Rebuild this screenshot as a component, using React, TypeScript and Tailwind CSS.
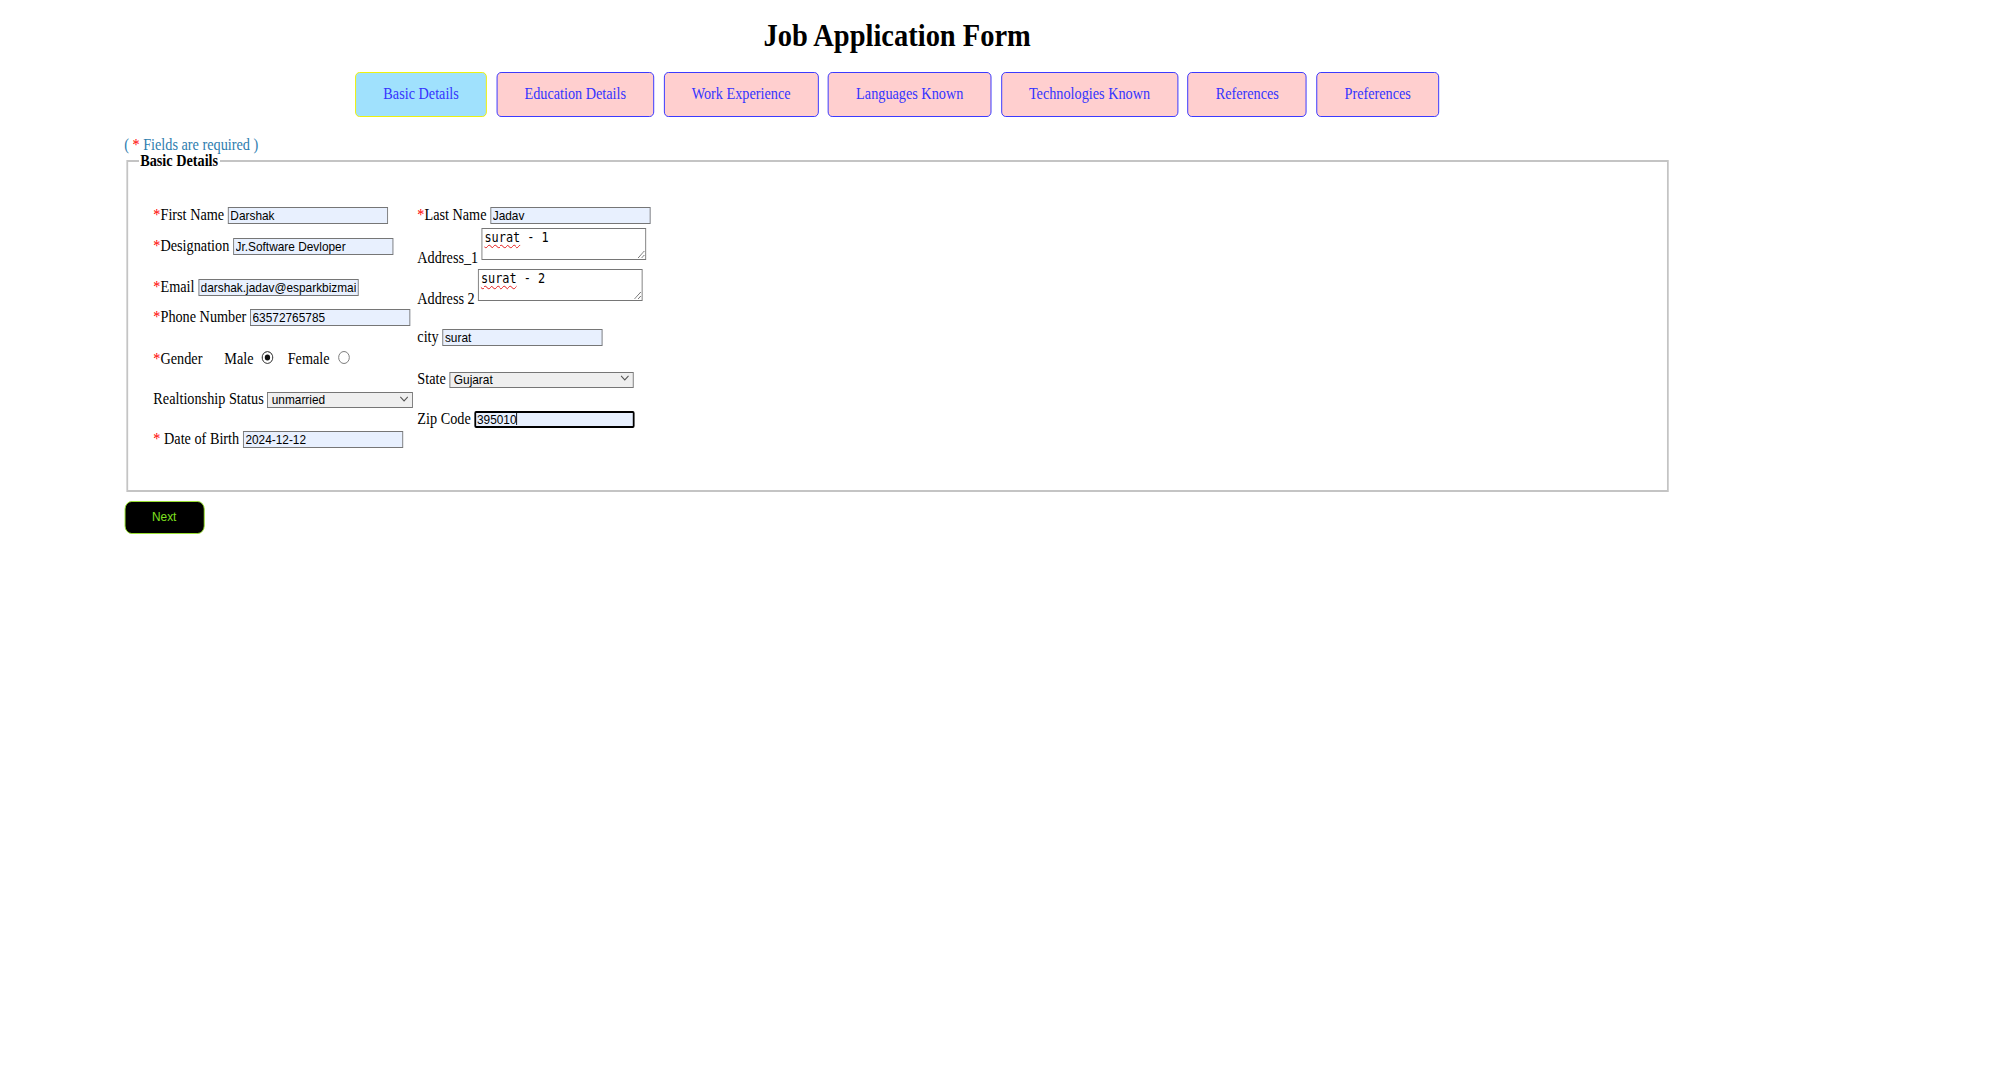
const tabs = [
  "Basic Details",
  "Education Details",
  "Work Experience",
  "Languages Known",
  "Technologies Known",
  "References",
  "Preferences",
];

const inputCls =
  "w-[180px] h-[17px] px-[2px] border border-[#767676] bg-[#e8f0fe] text-black text-[13.33px] leading-[15px] font-['Liberation_Sans',Arial,sans-serif] align-baseline";

const selectCls =
  "h-[16px] pl-[4px] pr-[18px] appearance-none border border-[#767676] bg-[#efefef] text-black text-[13.33px] leading-[14px] font-['Liberation_Sans',Arial,sans-serif] align-baseline";

const areaCls =
  "w-[185px] h-[32.5px] px-[2px] py-[1px] border border-[#767676] bg-white text-black text-[13.33px] leading-[15.5px] font-['DejaVu_Sans_Mono',monospace] align-baseline";

const radioCls =
  "w-[13px] h-[13px] appearance-none rounded-full border border-[#767676] bg-white align-baseline checked:border-[#555] checked:bg-[#111] checked:shadow-[inset_0_0_0_2.5px_white]";

function Req() {
  return <span className="text-[red]">*</span>;
}

function Tab({ label, active }: { label: string; active?: boolean }) {
  return (
    <button
      type="button"
      className={
        active
          ? "h-[45px] px-[30.5px] pb-[2px] flex items-center rounded-[5px] border-[1.5px] border-[#f0f000] bg-[#a0e1fd] text-[#3434ff] text-[16px] leading-[18px]"
          : "h-[45px] px-[30.5px] pb-[2px] flex items-center rounded-[5px] border-[1.5px] border-[#3030ff] bg-[#ffcfcf] text-[#3434ff] text-[16px] leading-[18px]"
      }
    >
      {label}
    </button>
  );
}

function Chevron() {
  return (
    <svg
      className="pointer-events-none absolute right-[5px] top-[5.5px] w-[10px] h-[6px] text-[#555]"
      viewBox="0 0 10 6"
      fill="none"
      stroke="currentColor"
      strokeWidth={1.2}
    >
      <path d="M0.8 0.8 5 5 9.2 0.8" />
    </svg>
  );
}

function Area({ value }: { value: string }) {
  const word = value.split(" ")[0];
  return (
    <span className="relative inline-block align-[2.5px]">
      <textarea defaultValue={value} spellCheck={false} className={areaCls} />
      <span className="pointer-events-none absolute left-[3px] top-[2px] text-transparent text-[13.33px] leading-[15.5px] font-['DejaVu_Sans_Mono',monospace] underline decoration-wavy decoration-[#e31b1b] decoration-1 underline-offset-[2px]">
        {word}
      </span>
    </span>
  );
}

export default function App() {
  return (
    <div className="min-h-screen overflow-hidden bg-white">
      <div className="w-[2239px] origin-top-left scale-x-[0.89] font-['Liberation_Serif','Times_New_Roman',serif] text-black">
        <div className="ml-[139.5px] w-[1737px] pt-[17px]">
          <h1 className="text-center text-[32px] leading-[37px] font-bold">
            Job Application Form
          </h1>

          <div className="mt-[18px] flex justify-center gap-[10.7px]">
            {tabs.map((t, i) => (
              <Tab key={t} label={t} active={i === 0} />
            ))}
          </div>

          <div className="mt-[19px] text-[16px] leading-[18px] text-[#2d7cae]">
            ( <span className="text-[red]">*</span> Fields are required )
          </div>

          <fieldset className="mx-[2px] -mt-[2.5px] border-2 border-[#c4c4c4] px-3 pt-[6px] pb-0">
            <legend className="px-[2px] font-bold text-[16px] leading-[18px]">
              Basic Details
            </legend>

            <div className="flex h-[314px] pt-[30.6px] pl-[16.8px] text-[16px] leading-[18px] whitespace-nowrap">
              <div className="w-[296.6px]">
                <div className="h-[31.2px]">
                  <label>
                    <Req />First Name
                  </label>{" "}
                  <input type="text" defaultValue="Darshak" className={inputCls} />
                </div>
                <div className="h-[40.3px]">
                  <label>
                    <Req />Designation
                  </label>{" "}
                  <input type="text" defaultValue="Jr.Software Devloper" className={inputCls} />
                </div>
                <div className="h-[30px]">
                  <label>
                    <Req />Email
                  </label>{" "}
                  <input
                    type="text"
                    defaultValue="darshak.jadav@esparkbizmail.com"
                    className={inputCls}
                  />
                </div>
                <div className="h-[42.3px]">
                  <label>
                    <Req />Phone Number
                  </label>{" "}
                  <input type="text" defaultValue="63572765785" className={inputCls} />
                </div>
                <div className="h-[40.6px]">
                  <span>
                    <Req />Gender
                  </span>
                  <span className="ml-[24.6px]">Male</span>
                  <input type="radio" name="gender" defaultChecked className={`${radioCls} ml-[9.5px]`} />
                  <span className="ml-[15.9px]">Female</span>
                  <input type="radio" name="gender" className={`${radioCls} ml-[9.7px]`} />
                </div>
                <div className="h-[39.5px]">
                  <label>Realtionship Status</label>{" "}
                  <span className="relative inline-block">
                    <select defaultValue="unmarried" className={`${selectCls} w-[163.4px]`}>
                      <option value="unmarried">unmarried</option>
                      <option value="married">married</option>
                    </select>
                    <Chevron />
                  </span>
                </div>
                <div>
                  <label>
                    <Req /> Date of Birth
                  </label>{" "}
                  <input type="text" defaultValue="2024-12-12" className={inputCls} />
                </div>
              </div>

              <div>
                <div className="h-[21.5px]">
                  <label>
                    <Req />Last Name
                  </label>{" "}
                  <input type="text" defaultValue="Jadav" className={inputCls} />
                </div>
                <div className="h-[41.3px]">
                  <label>Address_1</label> <Area value="surat - 1" />
                </div>
                <div className="h-[58.9px]">
                  <label>Address 2</label> <Area value="surat - 2" />
                </div>
                <div className="h-[42px]">
                  <label>city</label>{" "}
                  <input type="text" defaultValue="surat" className={inputCls} />
                </div>
                <div className="h-[40px]">
                  <label>State</label>{" "}
                  <span className="relative inline-block">
                    <select defaultValue="Gujarat" className={`${selectCls} w-[206.8px]`}>
                      <option value="Gujarat">Gujarat</option>
                      <option value="Maharashtra">Maharashtra</option>
                      <option value="Rajasthan">Rajasthan</option>
                    </select>
                    <Chevron />
                  </span>
                </div>
                <div>
                  <label>Zip Code</label>{" "}
                  <span className="relative inline-block">
                    <input
                      type="text"
                      defaultValue="395010"
                      className="w-[180px] h-[17px] px-[1px] border-2 border-black rounded-[2px] bg-[#e8f0fe] text-black text-[13.33px] leading-[13px] font-['Liberation_Sans',Arial,sans-serif] align-baseline"
                    />
                    <span className="pointer-events-none absolute left-[47px] top-[2px] h-[13px] w-px bg-black" />
                  </span>
                </div>
              </div>
            </div>
          </fieldset>

          <button
            type="button"
            className="mt-[9px] w-[90px] h-[33px] rounded-[8px] border-[1.5px] border-[#9be62e] bg-black text-[#7fe01f] text-[13.33px] font-['Liberation_Sans',Arial,sans-serif]"
          >
            Next
          </button>
        </div>
      </div>
    </div>
  );
}
